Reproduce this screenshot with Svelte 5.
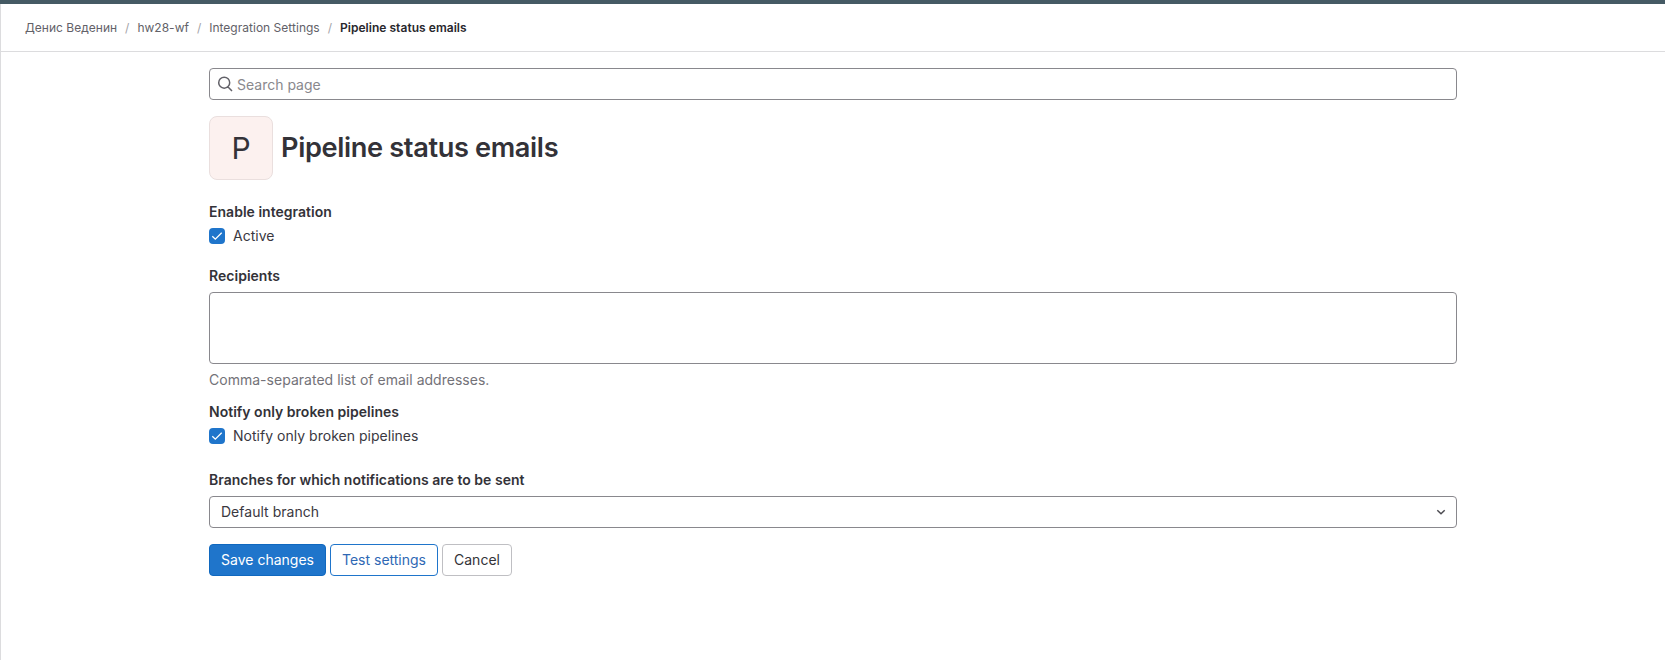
<script>
  const crumbs = ['Денис Веденин', 'hw28-wf', 'Integration Settings'];
  let search = $state('');
  let recipients = $state('');
</script>

{#snippet check(label)}
  <label class="check">
    <span class="box">
      <svg viewBox="0 0 16 16" width="16" height="16"><path d="M3.3 8.2 6.3 11.2 12.7 4.8" fill="none" stroke="#fff" stroke-width="1.3" /></svg>
    </span>
    <span class="check-text">{label}</span>
  </label>
{/snippet}

<div class="page">
  <header>
    <nav>
      {#each crumbs as c}
        <a href="#top">{c}</a><span class="sep">/</span>
      {/each}
      <b>Pipeline status emails</b>
    </nav>
  </header>
  <main>
    <div class="search">
      <svg viewBox="0 0 16 16" width="16" height="16"><path fill="none" stroke="#626168" stroke-width="1.5" d="M12.7 6.7a5.5 5.5 0 1 1-11 0 5.5 5.5 0 0 1 11 0ZM10.8 10.8 15 15" /></svg>
      <input placeholder="Search page" bind:value={search} />
    </div>
    <div class="title">
      <div class="avatar">P</div>
      <h1>Pipeline status emails</h1>
    </div>
    <div class="label enable">Enable integration</div>
    {@render check('Active')}
    <div class="label recipients">Recipients</div>
    <textarea bind:value={recipients}></textarea>
    <p class="help">Comma-separated list of email addresses.</p>
    <div class="label notify">Notify only broken pipelines</div>
    {@render check('Notify only broken pipelines')}
    <div class="label branches">Branches for which notifications are to be sent</div>
    <div class="select">
      <span class="value">Default branch</span>
      <svg viewBox="0 0 16 16" width="16" height="16"><path d="M4.3 6.3 8 9.8l3.7-3.5" fill="none" stroke="#4c4b51" stroke-width="1.5" /></svg>
    </div>
    <div class="actions">
      <button class="save">Save changes</button>
      <button class="test">Test settings</button>
      <button class="cancel">Cancel</button>
    </div>
  </main>
</div>

<style>
  :global(body) { background: #fff; overflow: hidden; }
  * { box-sizing: border-box; }
  .page {
    height: 660px;
    border-top: 4px solid #455a64;
    font: 14px/16px Inter, sans-serif;
    letter-spacing: 0.02px;
    color: #3a383f;
    display: flex;
    flex-direction: column;
  }
  header, main { border-left: 1px solid #dcdcde; }
  header { height: 48px; border-bottom: 1px solid #dcdcde; padding: 0 24px; display: flex; align-items: center; }
  nav { display: flex; font-size: 12px; color: #28272d; }
  a { color: #626168; text-decoration: none; }
  .sep { color: #a4a3a8; width: 20.2px; text-align: center; }
  b { font-weight: 600; letter-spacing: 0.04px; }
  main { flex: 1; padding: 16px 208px 0; }
  .search { height: 32px; border: 1px solid #89888d; border-radius: 4px; display: flex; align-items: center; padding-left: 7px; gap: 4px; }
  input { flex: 1; height: 30px; border: 0; outline: 0; padding: 1px 0 0; background: none; font: inherit; color: inherit; }
  input::placeholder { color: #89888d; opacity: 1; }
  .title { display: flex; align-items: center; gap: 8px; margin-top: 16px; }
  .avatar { width: 64px; height: 64px; border: 1px solid #eadfde; border-radius: 8px; background: #fcf1ef; display: flex; align-items: center; justify-content: center; font-size: 30px; line-height: 64px; color: #333238; }
  h1 { margin: 0; padding-bottom: 1px; font-size: 27.2px; line-height: 36px; font-weight: 600; letter-spacing: -0.36px; color: #333238; }
  .label { font-weight: 600; line-height: 16px; color: #333238; margin-bottom: 8px; }
  .enable { margin-top: 24px; }
  .recipients { margin-top: 24px; }
  .notify { margin-top: 16px; }
  .branches { margin-top: 28px; }
  .check { display: flex; gap: 8px; height: 16px; }
  .box { width: 16px; height: 16px; border-radius: 4px; background: #1f75cb; }
  .box svg { display: block; }
  textarea { display: block; width: 100%; height: 72px; border: 1px solid #89888d; border-radius: 4px; resize: none; outline: 0; background: none; font: inherit; padding: 8px 12px; }
  .help { margin: 8px 0 0; color: #737278; }
  .select { height: 32px; border: 1px solid #89888d; border-radius: 4px; display: flex; align-items: center; justify-content: space-between; padding: 0 7px 0 11px; }
  .actions { display: flex; gap: 4px; margin-top: 16px; }
  button { height: 32px; border: 1px solid #bfbfc3; border-radius: 4px; background: #fff; font: inherit; padding: 0; color: #333238; }
  .save { width: 117px; background: #1f75cb; border-color: #1068bf; color: #fff; }
  .test { width: 108px; color: #2f68b4; border-color: #1f75cb; }
  .cancel { width: 70px; }
</style>
